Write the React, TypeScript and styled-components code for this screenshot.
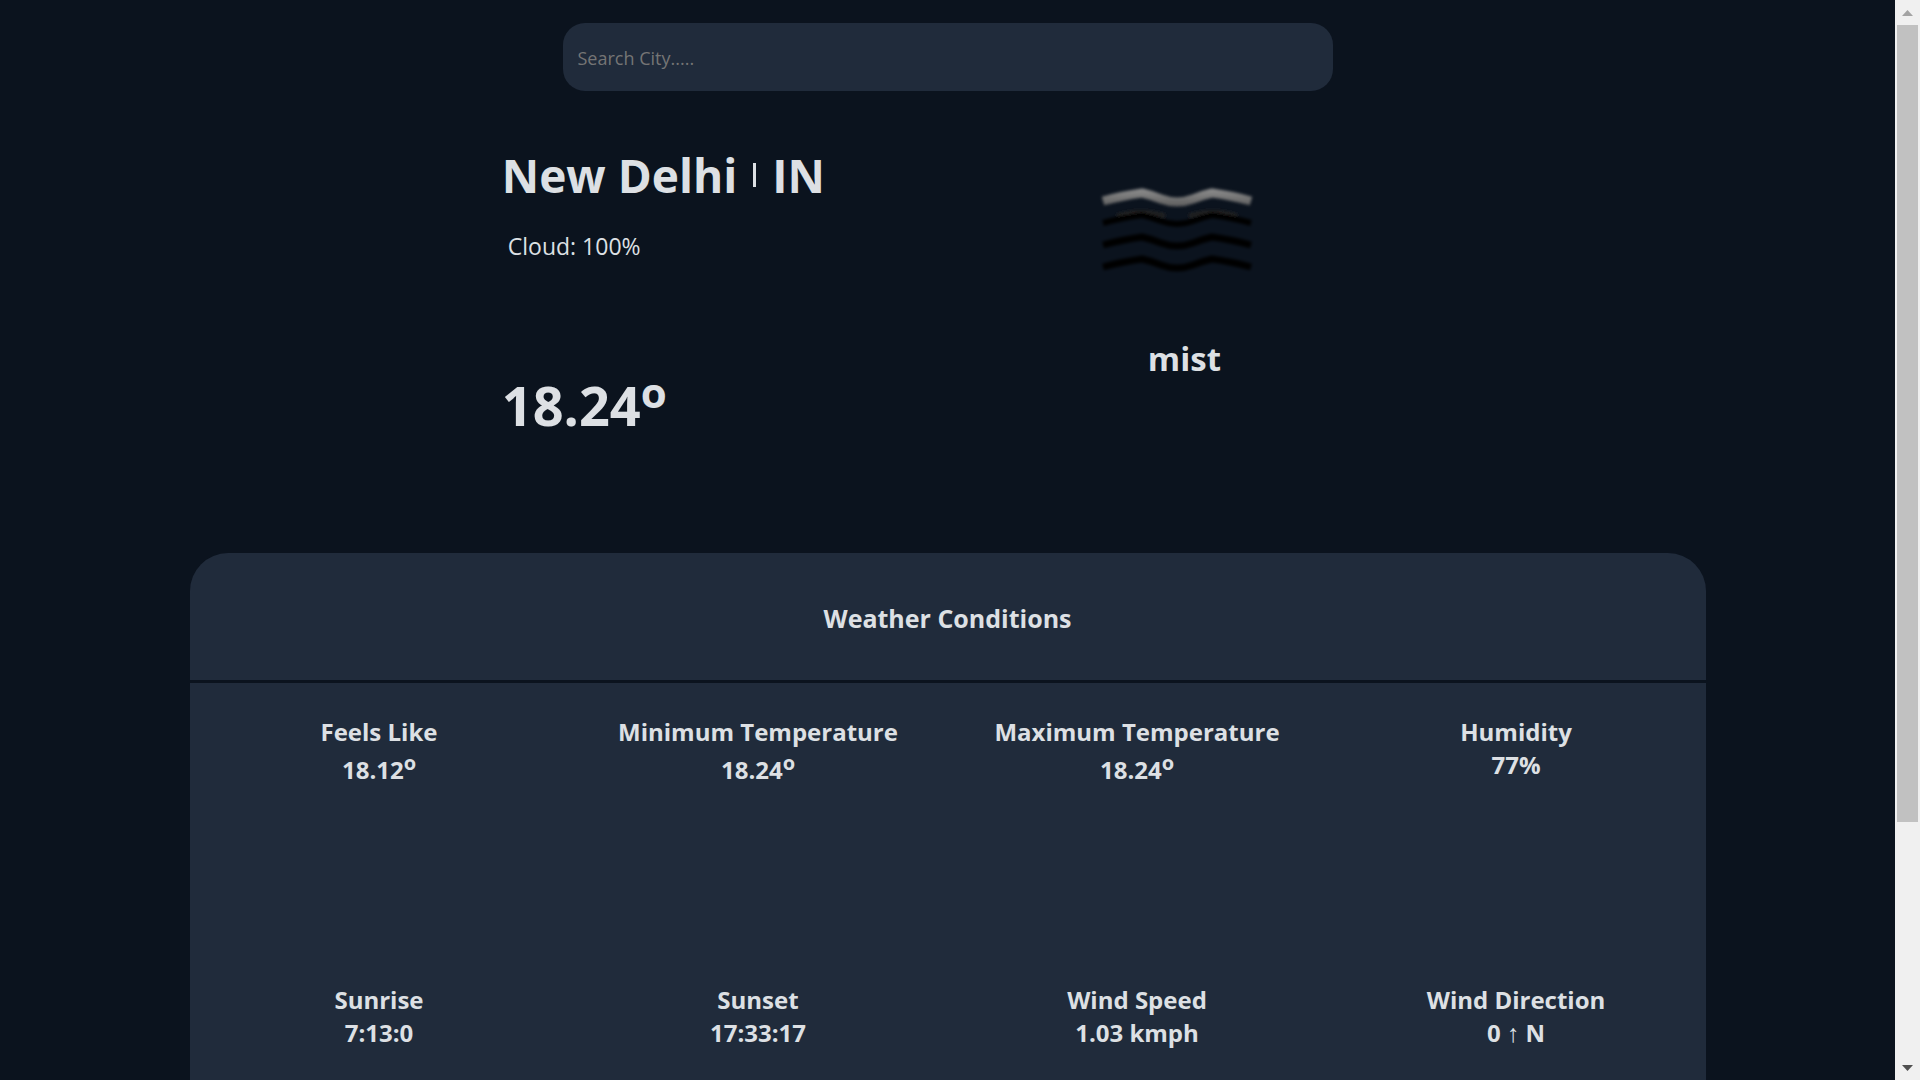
import React from "react";
import styled, { createGlobalStyle } from "styled-components";

const color = {
  page: "#0b131e",
  panel: "#202b3b",
  text: "#dde0e4",
  muted: "#757575",
};

const GlobalStyle = createGlobalStyle`
  * { box-sizing: border-box; margin: 0; padding: 0; }
  body {
    background: ${color.page};
    color: ${color.text};
    font-family: "Segoe UI", "Open Sans", "Noto Sans", sans-serif;
  }
`;

const Window = styled.div`
  display: flex;
  height: 100vh;
  overflow: hidden;
`;

const Page = styled.main`
  flex: 1;
  min-width: 0;
  overflow: hidden;
  display: flex;
  flex-direction: column;
  align-items: center;
`;

const SearchForm = styled.form`
  width: 100%;
  max-width: 770px;
  margin-top: 23px;
`;

const SearchInput = styled.input`
  display: block;
  width: 100%;
  height: 68px;
  padding: 2px 15px 0;
  border: 0;
  border-radius: 22px;
  outline: 0;
  background: ${color.panel};
  color: ${color.text};
  font-family: inherit;
  font-size: 18px;
  &::placeholder { color: ${color.muted}; opacity: 1; }
`;

const Hero = styled.section`
  display: grid;
  grid-template-columns: 1fr 1fr;
  width: 50%;
  height: 462px;
  flex-shrink: 0;
`;

const Place = styled.div`
  padding: 52px 0 0 28px;
  white-space: nowrap;
`;

const City = styled.h1`
  display: flex;
  align-items: center;
  gap: 16px;
  font-size: 46px;
  line-height: 64px;
`;

const Divider = styled.span`
  width: 3px;
  height: 24px;
  background: ${color.text};
`;

const Cloud = styled.p`
  margin-top: 23px;
  padding-left: 6px;
  font-size: 23px;
  line-height: 32px;
`;

const Temperature = styled.p`
  margin-top: 107px;
  font-size: 54px;
  font-weight: 700;
  line-height: 72px;
`;

const Degree = styled.sup<{ $size: number; $rise: number }>`
  font-size: ${(p) => p.$size}px;
  line-height: 0;
  vertical-align: ${(p) => p.$rise}px;
`;

const Sky = styled.div`
  display: flex;
  flex-direction: column;
  align-items: center;
  padding-top: 76px;
`;

const MistIcon = styled.svg`
  width: 184px;
  height: 128px;
  margin-right: 14px;
`;

const Description = styled.h2`
  margin-top: 40px;
  font-size: 33px;
  line-height: 48px;
`;

const Conditions = styled.section`
  width: 80%;
  flex-shrink: 0;
  border-radius: 38px 38px 0 0;
  background: ${color.panel};
`;

const ConditionsTitle = styled.h2`
  padding: 49px 0 45px;
  border-bottom: 3px solid ${color.page};
  font-size: 25px;
  line-height: 33px;
  text-align: center;
`;

const Stats = styled.dl`
  display: grid;
  grid-template-columns: repeat(4, 1fr);
  grid-auto-rows: 268px;
  padding-top: 32px;
`;

const Stat = styled.div`
  font-size: 24px;
  font-weight: 700;
  line-height: 33px;
  text-align: center;
`;

const StatValue = styled.dd<{ $raised?: boolean }>`
  padding-top: ${(p) => (p.$raised ? 5 : 0)}px;
`;

const Arrow = styled.span`
  font-size: 25px;
  font-weight: 400;
  line-height: 24px;
`;

const Scrollbar = styled.aside`
  display: flex;
  flex-direction: column;
  width: 25px;
  background: #f0f0f0;
`;

const ScrollButton = styled.button`
  display: grid;
  place-items: center;
  width: 25px;
  height: 25px;
  border: 0;
  background: none;
`;

const ScrollTrack = styled.div`
  flex: 1;
  padding: 0 2px;
`;

const ScrollThumb = styled.div`
  height: 77.4%;
  background: #c1c1c1;
`;

type Reading = { label: string; value: React.ReactNode; degree?: boolean };

const readings: Reading[] = [
  { label: "Feels Like", value: "18.12", degree: true },
  { label: "Minimum Temperature", value: "18.24", degree: true },
  { label: "Maximum Temperature", value: "18.24", degree: true },
  { label: "Humidity", value: "77%" },
  { label: "Sunrise", value: "7:13:0" },
  { label: "Sunset", value: "17:33:17" },
  { label: "Wind Speed", value: "1.03 kmph" },
  { label: "Wind Direction", value: <>0 <Arrow>↑</Arrow> N</> },
];

const wave = (y: number) =>
  `M18 ${y} Q36 ${y - 5} 57 ${y - 8} Q66 ${y - 6} 76 ${y - 2} Q92 ${y + 4} 108 ${y - 2} Q118 ${y - 6} 127 ${y - 8} Q148 ${y - 5} 166 ${y}`;

function Mist() {
  return (
    <MistIcon viewBox="0 0 184 128" role="img" aria-label="mist">
      <defs>
        <filter id="soft" x="-10%" y="-20%" width="120%" height="140%">
          <feGaussianBlur stdDeviation="1.5" />
        </filter>
        <linearGradient id="fog" gradientUnits="userSpaceOnUse" x1="0" y1="20" x2="0" y2="40">
          <stop offset="0" stopColor="#929292" />
          <stop offset="1" stopColor="#5c5c5c" />
        </linearGradient>
      </defs>
      <g fill="none" strokeLinejoin="round" filter="url(#soft)">
        <path d={wave(34)} stroke="url(#fog)" strokeWidth="9" strokeLinecap="butt" />
        <path d="M32 49 Q56 41 80 49 M104 49 Q128 41 152 49" stroke="#242221" strokeWidth="4" />
        <path d={wave(56)} stroke="#000" strokeWidth="6" strokeLinecap="butt" />
        <path d={wave(78)} stroke="#000" strokeWidth="7" strokeLinecap="butt" />
        <path d={wave(100)} stroke="#000" strokeWidth="7" strokeLinecap="butt" />
      </g>
    </MistIcon>
  );
}

export default function App() {
  return (
    <>
      <GlobalStyle />
      <Window>
        <Page>
          <SearchForm onSubmit={(e) => e.preventDefault()}>
            <SearchInput type="text" aria-label="Search City" placeholder="Search City....." />
          </SearchForm>
          <Hero>
            <Place>
              <City>
                New Delhi <Divider /> IN
              </City>
              <Cloud>Cloud: 100%</Cloud>
              <Temperature>
                18.24<Degree $size={42} $rise={18}>o</Degree>
              </Temperature>
            </Place>
            <Sky>
              <Mist />
              <Description>mist</Description>
            </Sky>
          </Hero>
          <Conditions>
            <ConditionsTitle>Weather Conditions</ConditionsTitle>
            <Stats>
              {readings.map((r) => (
                <Stat key={r.label}>
                  <dt>{r.label}</dt>
                  <StatValue $raised={r.degree}>
                    {r.value}
                    {r.degree && <Degree $size={20} $rise={9}>o</Degree>}
                  </StatValue>
                </Stat>
              ))}
            </Stats>
          </Conditions>
        </Page>
        <Scrollbar>
          <ScrollButton type="button" aria-label="Scroll up">
            <svg width="11" height="6" viewBox="0 0 11 6">
              <path d="M0 6 L5.5 0 L11 6 Z" fill="#a3a3a3" />
            </svg>
          </ScrollButton>
          <ScrollTrack>
            <ScrollThumb />
          </ScrollTrack>
          <ScrollButton type="button" aria-label="Scroll down">
            <svg width="11" height="6" viewBox="0 0 11 6">
              <path d="M0 0 L5.5 6 L11 0 Z" fill="#505050" />
            </svg>
          </ScrollButton>
        </Scrollbar>
      </Window>
    </>
  );
}
